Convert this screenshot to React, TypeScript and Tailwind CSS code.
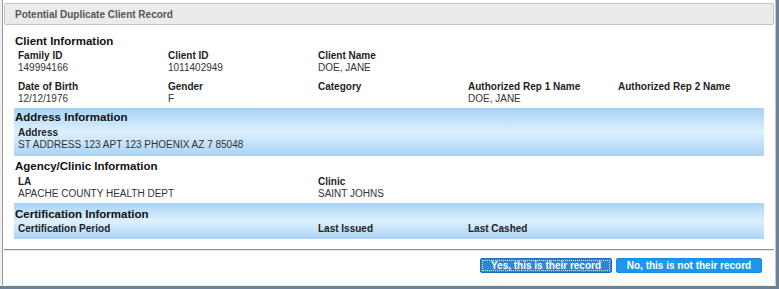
import React from "react";

type F = { label: string; value?: string };

function Field({ label, value }: F) {
  return (
    <div className="flex flex-col whitespace-nowrap">
      <div className="text-[10px] leading-[12px] font-bold text-[#1e1e1e]">{label}</div>
      <div className="text-[10px] leading-[12px] text-[#333] h-[12px]">{value ?? ""}</div>
    </div>
  );
}

function Row({ fields, className = "" }: { fields: (F | null)[]; className?: string }) {
  return (
    <div className={`grid grid-cols-[150px_150px_150px_150px_150px] pl-[4px] ${className}`}>
      {fields.map((f, i) => (f ? <Field key={i} {...f} /> : <div key={i} />))}
    </div>
  );
}

function Heading({ children, className = "" }: { children: React.ReactNode; className?: string }) {
  return (
    <div className={`text-[11.5px] leading-[16px] font-bold text-[#111] pl-[1px] whitespace-nowrap ${className}`}>{children}</div>
  );
}

const band = "bg-linear-to-b from-[#a6d2f5] via-[#def0fd] to-[#a9d3f5]";

export default function App() {
  return (
    <div
      className="w-[779px] h-[289px] bg-[#6d8199] overflow-hidden"
      style={{ fontFamily: '"Liberation Sans", Arial, sans-serif' }}
    >
      <div className="w-[776px] h-[286px] bg-[#efefef] pl-[2px] pb-[1px]">
        <div className="h-full bg-white border-l border-[#9a9a9a] border-r border-r-[#c8c8c8] flex flex-col">
          {/* Header */}
          <div className="mt-[3px] mx-[1px] h-[22px] bg-[#ebebeb] border border-[#c3c3c3] rounded-[2px] flex items-center pl-[10px]">
            <span className="text-[10px] font-bold text-[#555]">Potential Duplicate Client Record</span>
          </div>

          <div className="px-[11px]">
            {/* Client Information */}
            <Heading className="mt-[8px]">Client Information</Heading>
            <Row
              className="mt-[1px]"
              fields={[
                { label: "Family ID", value: "149994166" },
                { label: "Client ID", value: "1011402949" },
                { label: "Client Name", value: "DOE, JANE" },
                null,
                null,
              ]}
            />
            <Row
              className="mt-[7px]"
              fields={[
                { label: "Date of Birth", value: "12/12/1976" },
                { label: "Gender", value: "F" },
                { label: "Category" },
                { label: "Authorized Rep 1 Name", value: "DOE, JANE" },
                { label: "Authorized Rep 2 Name" },
              ]}
            />

            {/* Address Information */}
            <div className={`mt-[3px] h-[48px] pt-[1px] ${band}`}>
              <Heading>Address Information</Heading>
              <div className="pl-[4px] mt-[2px]">
                <Field label="Address" value="ST ADDRESS 123 APT 123 PHOENIX AZ 7 85048" />
              </div>
            </div>

            {/* Agency/Clinic */}
            <Heading className="mt-[2px]">Agency/Clinic Information</Heading>
            <Row
              className="mt-[2px]"
              fields={[
                { label: "LA", value: "APACHE COUNTY HEALTH DEPT" },
                null,
                { label: "Clinic", value: "SAINT JOHNS" },
                null,
                null,
              ]}
            />

            {/* Certification */}
            <div className={`mt-[3px] h-[36px] pt-[3px] ${band}`}>
              <Heading>Certification Information</Heading>
              <div className="grid grid-cols-[300px_150px_150px] pl-[4px] mt-[1px] whitespace-nowrap">
                <div className="text-[10px] leading-[12px] font-bold text-[#1e1e1e]">Certification Period</div>
                <div className="text-[10px] leading-[12px] font-bold text-[#1e1e1e]">Last Issued</div>
                <div className="text-[10px] leading-[12px] font-bold text-[#1e1e1e]">Last Cashed</div>
              </div>
            </div>
          </div>

          {/* Divider */}
          <div className="mt-[10px] mx-[1px] h-[1px] bg-[#8593a5]" />
          <div className="mx-[1px] h-[1px] bg-[#e4e8ee]" />

          {/* Buttons */}
          <div className="mt-[7px] flex justify-end gap-[4px] pr-[13px]">
            <button className="w-[132px] h-[15px] rounded-[2px] bg-[#2f86d6] border border-[#1d6fc0] p-[1px] text-white">
              <div className="h-full w-full border border-dotted border-[#cfe4f7] flex items-center justify-center text-[10px] font-bold leading-none whitespace-nowrap">
                Yes, this is their record
              </div>
            </button>
            <button className="w-[146px] h-[15px] rounded-[2px] bg-[#1c97f0] border border-[#1a88e2] flex items-center justify-center text-white text-[10px] font-bold leading-none whitespace-nowrap">
              No, this is not their record
            </button>
          </div>
        </div>
      </div>
    </div>
  );
}
